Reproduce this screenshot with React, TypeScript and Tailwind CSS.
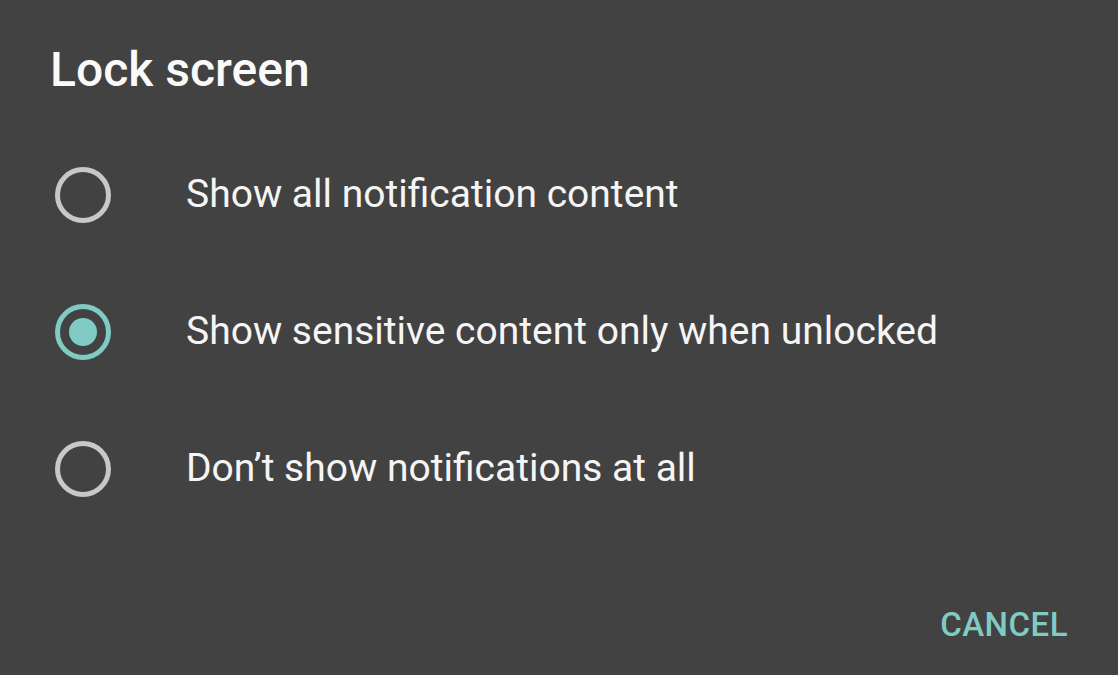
const options = [
  "Show all notification content",
  "Show sensitive content only when unlocked",
  "Don’t show notifications at all",
];

function Radio({ checked }: { checked: boolean }) {
  return (
    <div
      className={`flex h-[56px] w-[56px] shrink-0 items-center justify-center rounded-full border-[5px] ${
        checked ? "border-[#80cbc4]" : "border-[#c8c8c8]"
      }`}
    >
      {checked && <div className="h-[28px] w-[28px] rounded-full bg-[#80cbc4]" />}
    </div>
  );
}

export default function App() {
  const selected = 1;
  return (
    <div className="flex h-[675px] w-[1118px] flex-col bg-[#424242] font-['Roboto',sans-serif] text-white">
      <h1 className="pl-[50px] pt-[40px] text-[48px] font-medium leading-[60px] text-[#fafafa]">Lock screen</h1>
      <div className="mt-[26px] flex flex-col">
        {options.map((label, i) => (
          <div key={label} className="flex h-[137px] items-center pl-[55px]">
            <Radio checked={i === selected} />
            <span className="ml-[75px] text-[39px] leading-none text-[#f5f5f5]">{label}</span>
          </div>
        ))}
      </div>
      <div className="flex flex-1 items-center justify-end pr-[50px] pt-[38px]">
        <button className="text-[33px] font-medium tracking-[0.5px] text-[#80cbc4]">CANCEL</button>
      </div>
    </div>
  );
}
